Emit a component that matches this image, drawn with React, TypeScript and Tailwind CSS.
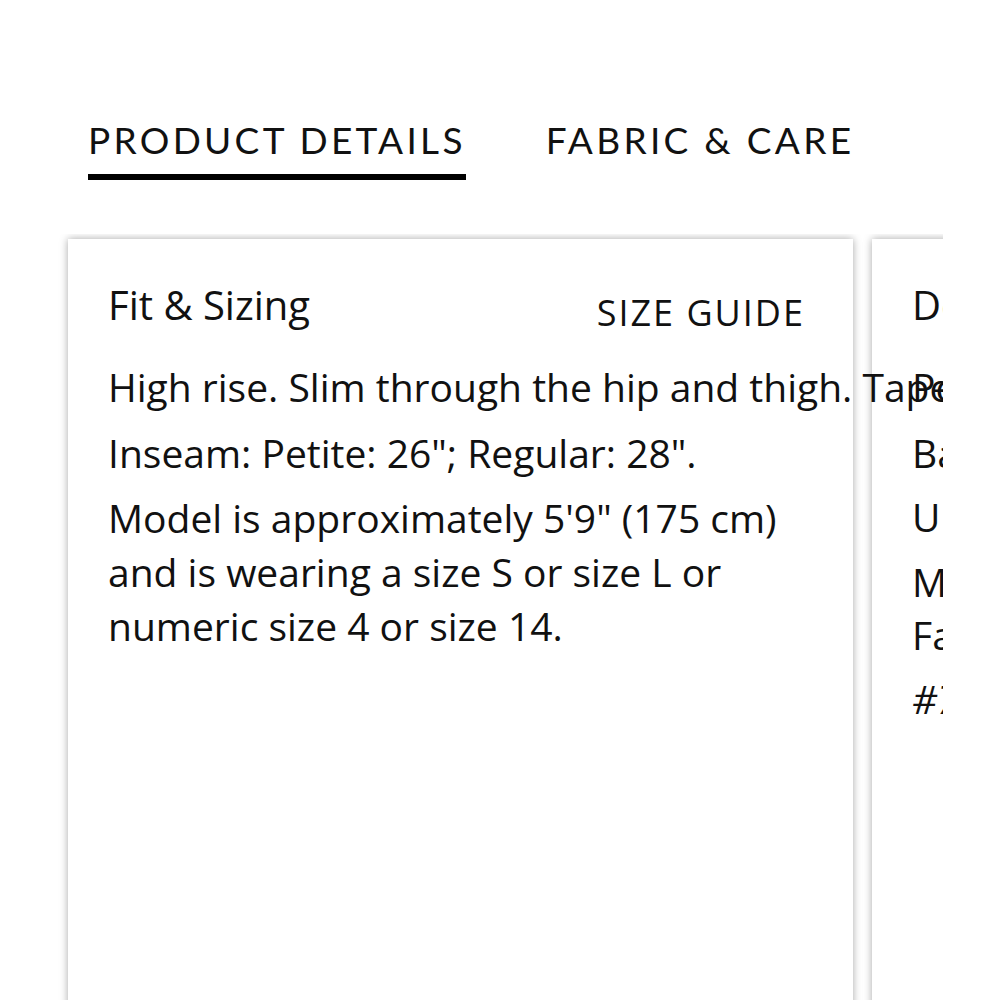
export default function App() {
  return (
    <main className="min-h-screen bg-white overflow-hidden text-[#111]">
      {/* tabs */}
      <div className="flex gap-[80px] pl-[88px] pt-[118px] font-['Lato',sans-serif]">
        <div className="flex flex-col">
          <span className="text-[37px] leading-[44px] tracking-[3.3px]">PRODUCT DETAILS</span>
          <div className="mt-[12px] h-[6px] bg-black"></div>
        </div>
        <span className="text-[37px] leading-[44px] tracking-[3.3px]">FABRIC &amp; CARE</span>
      </div>

      {/* cards */}
      <div className="mt-[54px] ml-[58px] w-[885px] overflow-hidden pl-[10px] pt-[5px] font-['Open_Sans',sans-serif]">
        <div className="flex gap-[19px]">
          <section className="relative z-10 w-[785px] h-[780px] shrink-0 bg-white shadow-[0_0_8px_rgba(0,0,0,0.35)] pl-[40px] pr-[48px] pt-[40px]">
            <div className="flex justify-between items-end">
              <h2 className="text-[40px] leading-[52px]">Fit &amp; Sizing</h2>
              <button className="text-[36px] leading-[52px] tracking-[2px] mb-[-8px]">SIZE GUIDE</button>
            </div>
            <p className="mt-[30px] text-[39px] leading-[52px] whitespace-nowrap">
              High rise. Slim through the hip and thigh. Tapered leg.
            </p>
            <p className="mt-[14px] text-[39px] leading-[52px]">Inseam: Petite: 26"; Regular: 28".</p>
            <p className="mt-[12px] text-[39px] leading-[54px]">
              Model is approximately 5'9" (175 cm) and is wearing a size S or size L or numeric size 4 or size 14.
            </p>
          </section>
          <section className="w-[785px] h-[780px] shrink-0 bg-white shadow-[0_0_8px_rgba(0,0,0,0.35)] pl-[40px] pr-[48px] pt-[40px]">
            <h2 className="text-[40px] leading-[52px]">Details</h2>
            <p className="mt-[30px] text-[39px] leading-[52px]">Pencil-leg silhouette.</p>
            <p className="mt-[14px] text-[39px] leading-[52px]">Back patch pockets.</p>
            <p className="mt-[12px] text-[39px] leading-[52px]">Unlined.</p>
            <p className="mt-[12px] text-[39px] leading-[53px] w-[40px]">Made Fabric</p>
            <p className="mt-[12px] text-[39px] leading-[52px] italic">#745612</p>
          </section>
        </div>
      </div>
    </main>
  );
}
